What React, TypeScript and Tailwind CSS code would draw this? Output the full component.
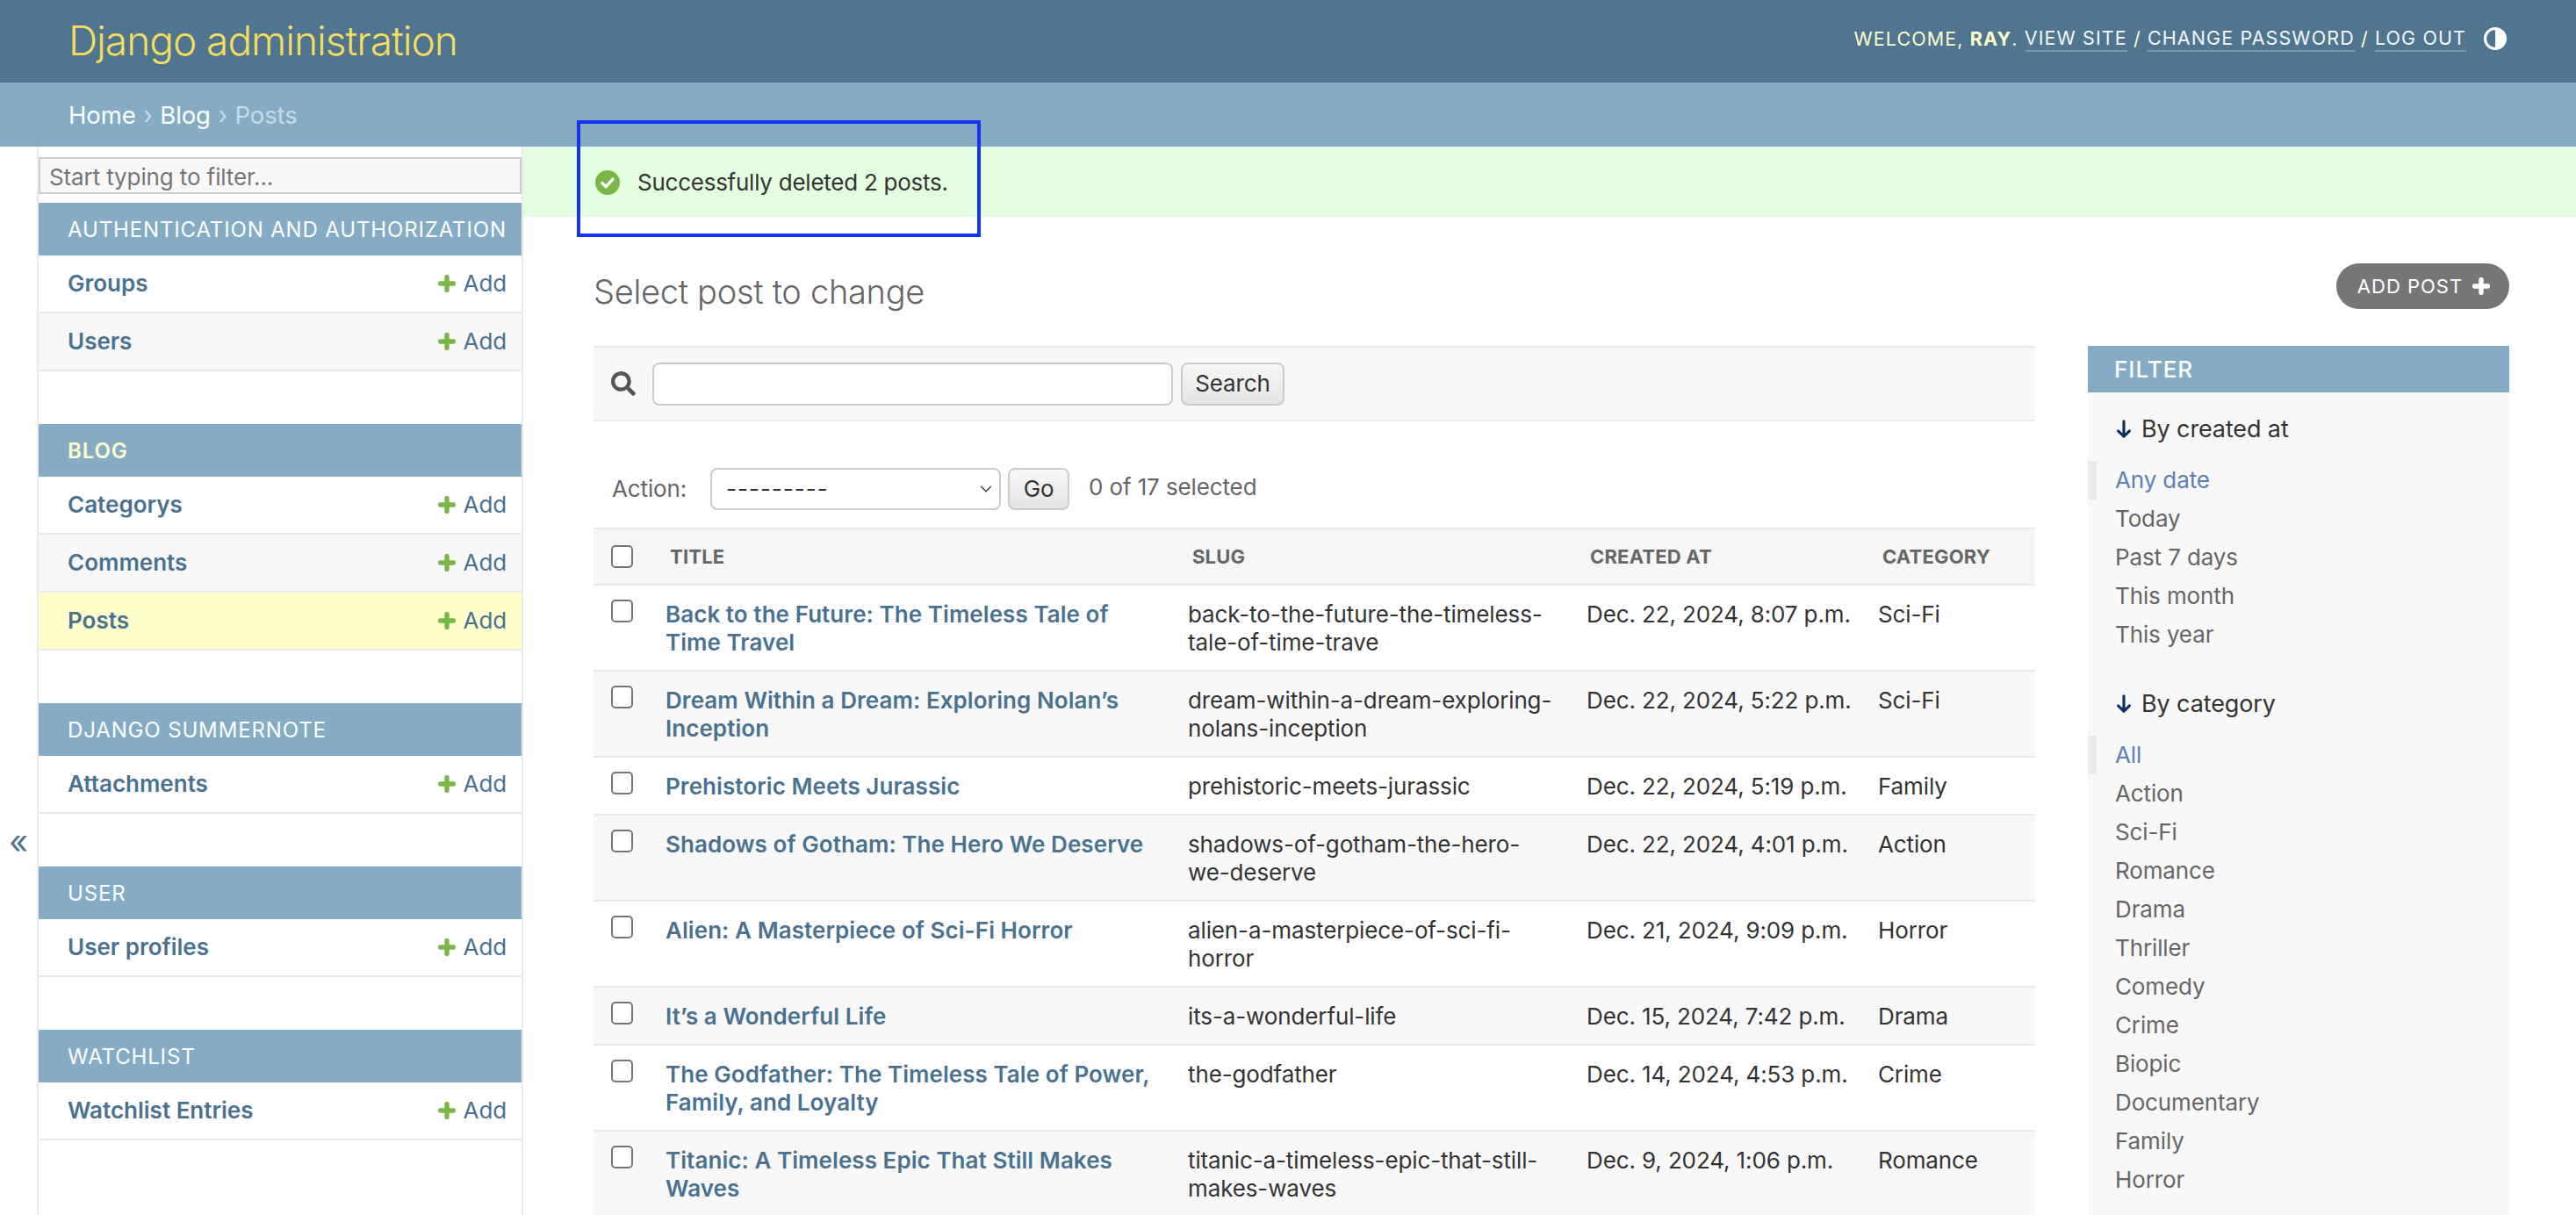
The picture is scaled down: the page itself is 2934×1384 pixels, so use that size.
import { ChevronDown } from "lucide-react";
import { FaSearch } from "react-icons/fa";

const sections = [
  { name: "Authentication and Authorization", rows: ["Groups", "Users"] },
  { name: "Blog", rows: ["Categorys", "Comments", "Posts"], active: "Posts" },
  { name: "Django Summernote", rows: ["Attachments"] },
  { name: "User", rows: ["User profiles"] },
  { name: "Watchlist", rows: ["Watchlist Entries"] },
];

const posts = [
  { t: ["Back to the Future: The Timeless Tale of", "Time Travel"], s: ["back-to-the-future-the-timeless-", "tale-of-time-trave"], d: "Dec. 22, 2024, 8:07 p.m.", c: "Sci-Fi" },
  { t: ["Dream Within a Dream: Exploring Nolan’s", "Inception"], s: ["dream-within-a-dream-exploring-", "nolans-inception"], d: "Dec. 22, 2024, 5:22 p.m.", c: "Sci-Fi" },
  { t: ["Prehistoric Meets Jurassic"], s: ["prehistoric-meets-jurassic"], d: "Dec. 22, 2024, 5:19 p.m.", c: "Family" },
  { t: ["Shadows of Gotham: The Hero We Deserve"], s: ["shadows-of-gotham-the-hero-", "we-deserve"], d: "Dec. 22, 2024, 4:01 p.m.", c: "Action" },
  { t: ["Alien: A Masterpiece of Sci-Fi Horror"], s: ["alien-a-masterpiece-of-sci-fi-", "horror"], d: "Dec. 21, 2024, 9:09 p.m.", c: "Horror" },
  { t: ["It’s a Wonderful Life"], s: ["its-a-wonderful-life"], d: "Dec. 15, 2024, 7:42 p.m.", c: "Drama" },
  { t: ["The Godfather: The Timeless Tale of Power,", "Family, and Loyalty"], s: ["the-godfather"], d: "Dec. 14, 2024, 4:53 p.m.", c: "Crime" },
  { t: ["Titanic: A Timeless Epic That Still Makes", "Waves"], s: ["titanic-a-timeless-epic-that-still-", "makes-waves"], d: "Dec. 9, 2024, 1:06 p.m.", c: "Romance" },
];

const dateFilters = ["Any date", "Today", "Past 7 days", "This month", "This year"];
const categoryFilters = ["All", "Action", "Sci-Fi", "Romance", "Drama", "Thriller", "Comedy", "Crime", "Biopic", "Documentary", "Family", "Horror"];

function Lines({ lines }: { lines: string[] }) {
  return (
    <>
      {lines.map((l) => (
        <span key={l} className="block whitespace-nowrap">
          {l}
        </span>
      ))}
    </>
  );
}

function Checkbox() {
  return <input type="checkbox" className="block h-[26px] w-[25px] appearance-none rounded-[5px] border-2 border-[#767676] bg-white" />;
}

function Plus({ color }: { color: string }) {
  return (
    <svg viewBox="0 0 20 20" className="h-[20px] w-[20px] shrink-0">
      <path d="M10 2.5v15M2.5 10h15" fill="none" stroke={color} strokeWidth="5.4" strokeLinecap="round" />
    </svg>
  );
}

function DownArrow() {
  return (
    <svg viewBox="0 0 18 24" className="h-[22px] w-[18px] shrink-0">
      <path d="M9 2v19M2 14l7 7 7-7" fill="none" stroke="#0f2f63" strokeWidth="3.4" strokeLinecap="round" strokeLinejoin="round" />
    </svg>
  );
}

function FilterGroup({ title, items }: { title: string; items: string[] }) {
  return (
    <div className="pb-[35px]">
      <div className="flex h-[44px] items-center gap-[11px] pl-[32px] text-[27px] text-[#333]">
        <DownArrow />
        <span>{title}</span>
      </div>
      <ul className="mt-[14px]">
        {items.map((item, i) => (
          <li
            key={item}
            className={
              i === 0
                ? "h-[44px] border-l-[10px] border-[#eaeaea] pl-[21px] leading-[44px] text-[#5b80b2]"
                : "h-[44px] pl-[31px] leading-[44px] text-[#666]"
            }
          >
            {item}
          </li>
        ))}
      </ul>
    </div>
  );
}

export default function App() {
  return (
    <div className="relative flex h-[1384px] flex-col overflow-hidden bg-white text-[26px] leading-[32px] tracking-[-0.12px] text-[#333] [font-family:Inter,sans-serif]">
      <header className="flex h-[94px] shrink-0 items-center justify-between bg-[#4f7590] pl-[78px] pr-[79px]">
        <div className="-mt-[2px] text-[46px] font-light leading-[56px] tracking-[-1px] text-[#f5dd5d]">Django administration</div>
        <div className="-mt-[6px] flex items-center text-[21.5px] uppercase leading-[28px] tracking-[1.1px] text-[#ffffcc]">
          <span>
            Welcome, <strong className="font-bold">Ray</strong>.&nbsp;
          </span>
          <span className="border-b-2 border-white/25 text-[#f7f7f7]">View site</span>
          <span>&nbsp;/&nbsp;</span>
          <span className="border-b-2 border-white/25 text-[#f7f7f7]">Change password</span>
          <span>&nbsp;/&nbsp;</span>
          <span className="border-b-2 border-white/25 text-[#f7f7f7]">Log out</span>
          <svg viewBox="0 0 26 26" className="ml-[20px] h-[26px] w-[26px]">
            <circle cx="13" cy="13" r="11.5" fill="none" stroke="#fff" strokeWidth="3" />
            <path d="M13 1.5a11.5 11.5 0 0 1 0 23z" fill="#fff" />
          </svg>
        </div>
      </header>

      <div className="flex h-[73px] shrink-0 items-center bg-[#85abc5] pl-[78px] text-[27.5px] text-white">
        <span>Home</span>
        <span className="mx-[1px] text-[#c4dce8]">&nbsp;›&nbsp;</span>
        <span>Blog</span>
        <span className="mx-[1px] text-[#c4dce8]">&nbsp;›&nbsp;</span>
        <span className="text-[#c4dce8]">Posts</span>
      </div>

      <div className="flex min-h-0 flex-1">
        <button className="flex w-[42px] shrink-0 items-start justify-center pt-[772px] text-[38px] leading-none text-[#4f7590]">
          «
        </button>

        <aside className="w-[554px] shrink-0 border-x-2 border-[#eaeaea] pt-[12px]">
          <input
            placeholder="Start typing to filter..."
            className="block h-[42px] w-full border-2 border-[#cccccc] bg-[#f8f8f8] px-[10px] pt-[2px] text-[26px] placeholder:text-[#757575]"
          />
          <div className="mt-[10px] flex flex-col gap-[60px]">
            {sections.map((s) => (
              <section key={s.name}>
                <div
                  className={
                    "flex h-[60px] items-center bg-[#85abc5] pl-[33px] pt-[1px] text-[24px] uppercase tracking-[0.85px] " +
                    (s.active ? "font-semibold text-[#ffffcc]" : "text-white")
                  }
                >
                  {s.name}
                </div>
                {s.rows.map((r, i) => (
                  <div
                    key={r}
                    className={
                      "flex h-[66px] items-center justify-between border-b-2 border-[#eaeaea] pl-[33px] pr-[17px] " +
                      (r === s.active ? "bg-[#ffffcc]" : i % 2 === 1 ? "bg-[#f8f8f8]" : "bg-white")
                    }
                  >
                    <span className="font-semibold tracking-normal text-[#4a7290]">{r}</span>
                    <span className="flex items-center gap-[9px] text-[#4a7290]">
                      <Plus color="#7ab648" />
                      Add
                    </span>
                  </div>
                ))}
              </section>
            ))}
          </div>
        </aside>

        <main className="min-w-0 flex-1">
          <div className="flex h-[80px] items-center gap-[20px] bg-[#e3ffdf] pl-[82px] pt-[1px] text-[26px] tracking-[-0.25px] text-[#333]">
            <svg viewBox="0 0 28 28" className="h-[28px] w-[28px]">
              <circle cx="14" cy="14" r="14" fill="#7ab648" />
              <path d="M8 14.5l4.2 4.2L20 10" fill="none" stroke="#fff" strokeWidth="3.4" strokeLinecap="round" strokeLinejoin="round" />
            </svg>
            <span>Successfully deleted 2 posts.</span>
          </div>

          <div className="pl-[80px] pr-[76px]">
            <div className="flex h-[147px] items-start justify-between pt-[53px]">
              <h1 className="text-[38px] font-light leading-[64px] tracking-[-0.3px] text-[#666]">Select post to change</h1>
              <a className="flex h-[52px] w-[197px] items-center justify-center gap-[11px] rounded-[26px] bg-[#767676] pl-[2px] text-[22px] uppercase tracking-[1px] text-white">
                Add post
                <Plus color="#fff" />
              </a>
            </div>

            <div className="flex gap-[60px]">
              <div className="w-[1642px] shrink-0">
                <div className="flex h-[86px] items-center border-y-2 border-[#eaeaea] bg-[#f8f8f8] pl-[20px]">
                  <FaSearch className="h-[28px] w-[28px] text-[#555]" />
                  <input className="ml-[19px] h-[49px] w-[593px] rounded-[8px] border-2 border-[#cccccc] bg-white" />
                  <button className="ml-[9px] h-[49px] w-[118px] rounded-[8px] border-2 border-[#cccccc] bg-linear-to-b from-[#f8f8f8] to-[#e4e4e4] text-[#333]">
                    Search
                  </button>
                </div>

                <div className="flex h-[121px] items-start pl-[21px] pt-[53px] text-[#666]">
                  <span className="flex h-[48px] w-[112px] items-center">Action:</span>
                  <div className="relative">
                    <select className="block h-[48px] w-[331px] appearance-none rounded-[8px] border-2 border-[#cccccc] bg-white pl-[16px] tracking-[1px] text-[#333]">
                      <option>---------</option>
                    </select>
                    <ChevronDown className="absolute right-[6px] top-[13px] h-[22px] w-[22px] text-[#333]" strokeWidth={1.3} />
                  </div>
                  <button className="ml-[8px] h-[48px] w-[70px] rounded-[8px] border-2 border-[#cccccc] bg-linear-to-b from-[#f8f8f8] to-[#e4e4e4] text-[#333]">
                    Go
                  </button>
                  <span className="ml-[22px] flex h-[44px] items-center">0 of 17 selected</span>
                </div>

                <table className="w-full table-fixed border-t-2 border-[#eaeaea]">
                  <colgroup>
                    <col className="w-[63px]" />
                    <col className="w-[594px]" />
                    <col className="w-[454px]" />
                    <col className="w-[332px]" />
                    <col className="w-[199px]" />
                  </colgroup>
                  <thead>
                    <tr className="h-[64px] border-b-2 border-[#eaeaea] bg-[#f6f6f6] text-left text-[22px] font-semibold uppercase tracking-[0.2px] text-[#666]">
                      <th className="pl-[20px] align-middle">
                        <Checkbox />
                      </th>
                      <th className="pl-[24px]">Title</th>
                      <th className="pl-[25px]">Slug</th>
                      <th className="pl-[24px]">Created at</th>
                      <th className="pl-[25px]">Category</th>
                    </tr>
                  </thead>
                  <tbody>
                    {posts.map((p, i) => (
                      <tr key={p.d} className={"border-b-2 border-[#eaeaea] align-top " + (i % 2 === 1 ? "bg-[#f8f8f8]" : "bg-white")}>
                        <td className="pl-[20px] pt-[16px]">
                          <Checkbox />
                        </td>
                        <td className="pb-[15px] pl-[19px] pt-[17px] font-semibold tracking-[0.06px] text-[#4a7290]">
                          <Lines lines={p.t} />
                        </td>
                        <td className="pb-[15px] pl-[20px] pt-[17px]">
                          <Lines lines={p.s} />
                        </td>
                        <td className="whitespace-nowrap pb-[15px] pl-[20px] pt-[17px]">{p.d}</td>
                        <td className="pb-[15px] pl-[20px] pt-[17px]">{p.c}</td>
                      </tr>
                    ))}
                  </tbody>
                </table>
              </div>

              <div className="w-[480px] shrink-0 bg-[#f8f8f8]">
                <div className="mb-[20px] flex h-[53px] items-center bg-[#85abc5] pl-[30px] text-[26px] font-medium uppercase tracking-[1px] text-white">
                  Filter
                </div>
                <FilterGroup title="By created at" items={dateFilters} />
                <FilterGroup title="By category" items={categoryFilters} />
              </div>
            </div>
          </div>
        </main>
      </div>

      <div className="absolute left-[657px] top-[137px] h-[133px] w-[460px] border-[4px] border-[#1433f5]" />
    </div>
  );
}
